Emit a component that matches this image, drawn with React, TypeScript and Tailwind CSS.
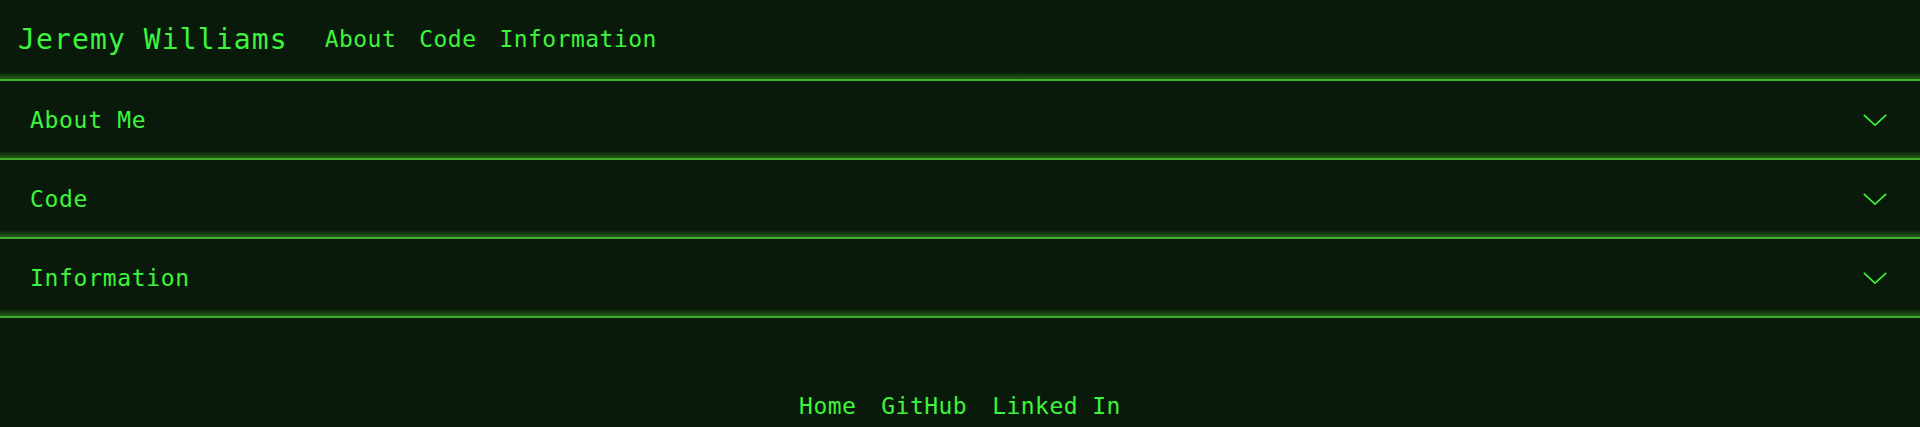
import React from 'react'

const sections = ['About Me', 'Code', 'Information']

const glow = 'border-b-2 border-[#3fae2a] bg-[linear-gradient(to_top,rgba(63,174,42,0.45),rgba(63,174,42,0)_7px)]'

const Chevron = () => (
  <svg width="24" height="12" viewBox="0 0 24 12" fill="none" className="shrink-0">
    <path d="M0.8 0.8 L12 11.2 L23.2 0.8" stroke="#3cf53c" strokeWidth="1.6" />
  </svg>
)

const App = () => {
  return (
    <div
      className="min-h-screen flex flex-col bg-[#0a1a0a] text-[#3cf53c]"
      style={{ fontFamily: '"DejaVu Sans Mono", "Liberation Mono", monospace' }}
    >
      {/* header */}
      <header className={`h-[81px] flex items-center pl-[18px] ${glow}`}>
        <h1 className="text-[28px] tracking-[0.04em] leading-none">Jeremy Williams</h1>
        <nav className="flex gap-[23px] ml-[37px] text-[23px] tracking-[0.02em] leading-none">
          <a href="#about">About</a>
          <a href="#code">Code</a>
          <a href="#info">Information</a>
        </nav>
      </header>

      {/* accordion */}
      <div>
        {sections.map((s) => (
          <button
            key={s}
            className={`w-full h-[79px] flex items-center justify-between pl-[30px] pr-[33px] text-[23px] tracking-[0.03em] leading-none ${glow}`}
          >
            <span className="pt-[2px]">{s}</span>
            <Chevron />
          </button>
        ))}
      </div>

      {/* footer */}
      <footer className="mt-auto flex justify-center gap-[25px] pb-[4px] text-[23px] tracking-[0.02em]">
        <a href="#">Home</a>
        <a href="#">GitHub</a>
        <a href="#">Linked In</a>
      </footer>
    </div>
  )
}

export default App
